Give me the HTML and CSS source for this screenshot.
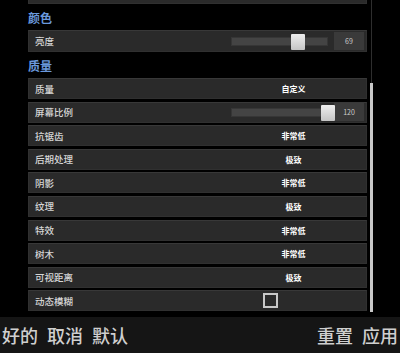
FILE: index.html
```html
<!DOCTYPE html>
<html lang="zh-CN">
<head>
  <meta charset="UTF-8">
  <meta name="viewport" content="width=device-width, initial-scale=1.0">
  <link rel="stylesheet" href="styles.css">
  <title>设置</title>
</head>
<body>

<div class="page">
  <div class="content">
    <div class="list">
      <div class="row stub"></div>

      <div class="section">颜色</div>
      <div class="row">
        <span class="label">亮度</span>
        <div class="slider">
          <div class="track"><span class="knob" style="left: 59px"></span></div>
          <span class="num">69</span>
        </div>
      </div>

      <div class="section">质量</div>
      <div class="rows">
        <div class="row">
          <span class="label">质量</span>
          <span class="value">自定义</span>
        </div>
        <div class="row">
          <span class="label">屏幕比例</span>
          <div class="slider">
            <div class="track"><span class="knob" style="left: 89px"></span></div>
            <span class="num">120</span>
          </div>
        </div>
        <div class="row">
          <span class="label">抗锯齿</span>
          <span class="value">非常低</span>
        </div>
        <div class="row">
          <span class="label">后期处理</span>
          <span class="value">极致</span>
        </div>
        <div class="row">
          <span class="label">阴影</span>
          <span class="value">非常低</span>
        </div>
        <div class="row">
          <span class="label">纹理</span>
          <span class="value">极致</span>
        </div>
        <div class="row">
          <span class="label">特效</span>
          <span class="value">非常低</span>
        </div>
        <div class="row">
          <span class="label">树木</span>
          <span class="value">非常低</span>
        </div>
        <div class="row">
          <span class="label">可视距离</span>
          <span class="value">极致</span>
        </div>
        <div class="row">
          <span class="label">动态模糊</span>
          <span class="check"></span>
        </div>
      </div>
    </div>

    <div class="scrollbar">
      <div class="thumb"></div>
    </div>
  </div>

  <div class="footer">
    <div class="actions">
      <span>好的</span>
      <span>取消</span>
      <span>默认</span>
    </div>
    <div class="actions">
      <span>重置</span>
      <span>应用</span>
    </div>
  </div>
</div>

</body>
</html>
```

FILE: styles.css
```css
body {
  margin: 0;
  background-color: #000;
  font-family: "Noto Sans CJK SC", "Noto Sans", sans-serif;
  color: #ddd;
}

.page {
  width: 400px;
  height: 353px;
  display: flex;
  flex-direction: column;
  overflow: hidden;
}

.content {
  height: 317px;
  display: flex;
}

.list {
  width: 339px;
  margin-left: 28px;
}

.row {
  height: 21px;
  display: grid;
  grid-template-columns: 192px 1fr;
  align-items: center;
  background-color: #2a2a2a;
  border: 1px solid #303030;
  border-top-color: #383838;
  box-sizing: border-box;
}

.stub {
  height: 4px;
  border-top: none;
}

.list > .row:not(.stub) {
  height: 22px;
}

.section {
  height: 26px;
  padding-top: 2px;
  box-sizing: border-box;
  line-height: 24px;
  font-size: 12px;
  font-weight: bold;
  color: #6a98dc;
}

.rows {
  display: flex;
  flex-direction: column;
  gap: 2.6px;
}

.label {
  padding-left: 6px;
  font-size: 9.5px;
  font-weight: 500;
  color: #d6d6d6;
}

.value {
  text-align: center;
  font-size: 8px;
  font-weight: bold;
  color: #fff;
}

.slider {
  display: flex;
  align-items: center;
  padding-left: 10px;
}

.track {
  position: relative;
  width: 97px;
  height: 9px;
  background-color: #444;
  border: 1px solid #363636;
  box-sizing: border-box;
}

.knob {
  position: absolute;
  top: -4px;
  width: 14px;
  height: 16px;
  background: linear-gradient(#eee, #c4c4c4);
  border-radius: 1px;
}

.num {
  width: 30px;
  height: 18px;
  margin-left: 6px;
  line-height: 18px;
  text-align: center;
  font-size: 7px;
  color: #ccc;
  background-color: #3a3a3a;
}

.check {
  width: 15px;
  height: 15px;
  margin-left: 42px;
  border: 2px solid #c8c8c8;
  box-sizing: border-box;
}

.scrollbar {
  width: 4px;
  margin-left: 2px;
  height: 312px;
  display: flex;
  flex-direction: column;
  align-items: center;
  background: linear-gradient(#2e2e2e, #2e2e2e) center / 1px 100% no-repeat;
}

.thumb {
  width: 3px;
  margin-top: 83px;
  flex: 1;
  background-color: #c8c8c8;
}

.footer {
  height: 36px;
  display: flex;
  justify-content: space-between;
  align-items: center;
  padding: 0 2px;
  background-color: #151515;
}

.actions {
  display: flex;
  gap: 9px;
  font-size: 18px;
  font-weight: 500;
  color: #cfcfcf;
}
```
